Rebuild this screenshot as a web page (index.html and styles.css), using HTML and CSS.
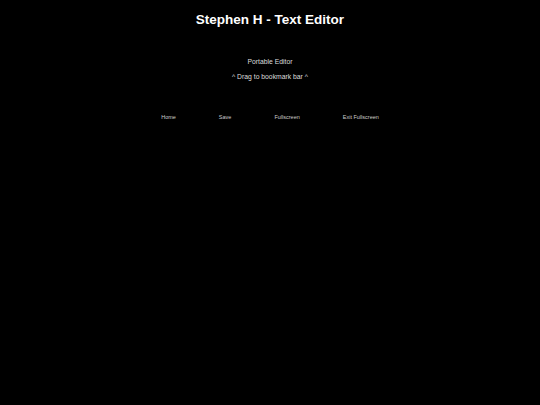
FILE: index.html
```html
<!DOCTYPE html>
<html>
<head>
<meta charset="utf-8">
<link rel="stylesheet" href="styles.css">
</head>
<body>
<h1 class="title">Stephen H - Text Editor</h1>
<div class="sub">
  <p class="line">Portable Editor</p>
  <p class="line">^ Drag to bookmark bar ^</p>
</div>
<nav class="nav">
  <a class="link">Home</a>
  <a class="link">Save</a>
  <a class="link">Fullscreen</a>
  <a class="link">Exit Fullscreen</a>
</nav>
</body>
</html>
```
FILE: styles.css
```css
html, body {
  margin: 0;
  padding: 0;
  background: #000;
  height: 100%;
}
body {
  font-family: "Liberation Sans", Arial, sans-serif;
  color: #fff;
}
.title {
  margin: 0;
  padding-top: 11px;
  font-size: 13.5px;
  line-height: 17px;
  font-weight: bold;
  text-align: center;
}
.sub {
  margin-top: 30px;
  text-align: center;
}
.line {
  margin: 0 0 7px 0;
  font-size: 6.8px;
  line-height: 8px;
  color: #ddd;
}
.nav {
  margin-top: 33px;
  display: flex;
  justify-content: center;
  gap: 43px;
}
.link {
  font-size: 5.5px;
  color: #ccc;
}
```
